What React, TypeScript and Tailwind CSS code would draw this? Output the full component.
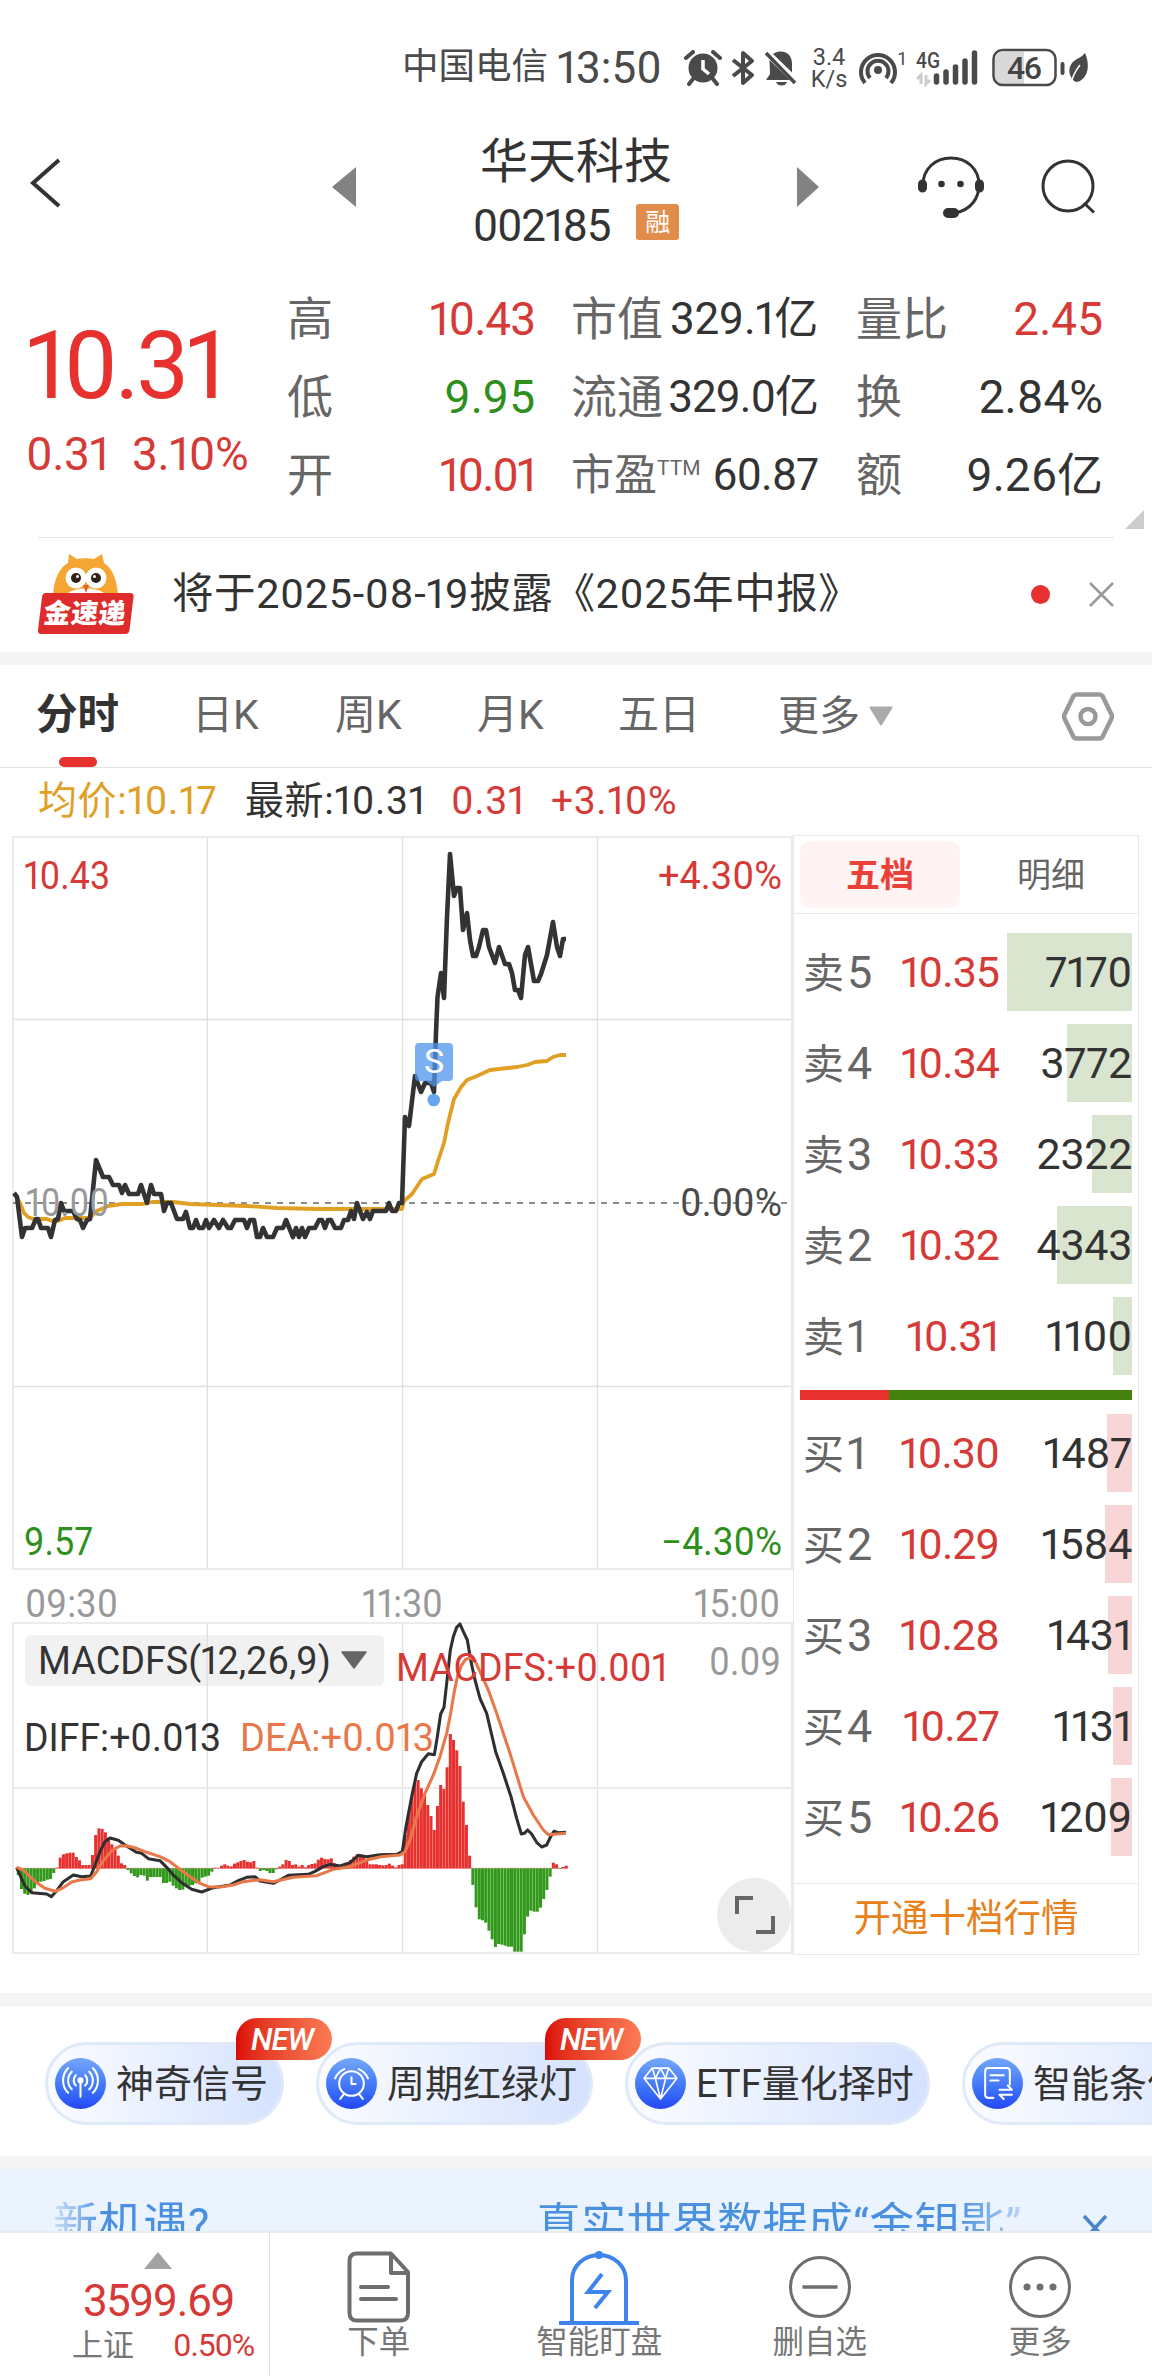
import type { ReactNode } from 'react'

type Level = { label: string; no: string; price: string; volume: string; width: number }

const SELLS: Level[] = [
  { label: '卖', no: '5', price: '10.35', volume: '7170', width: 125 },
  { label: '卖', no: '4', price: '10.34', volume: '3772', width: 65 },
  { label: '卖', no: '3', price: '10.33', volume: '2322', width: 40 },
  { label: '卖', no: '2', price: '10.32', volume: '4343', width: 75 },
  { label: '卖', no: '1', price: '10.31', volume: '1100', width: 19 },
]

const BUYS: Level[] = [
  { label: '买', no: '1', price: '10.30', volume: '1487', width: 25 },
  { label: '买', no: '2', price: '10.29', volume: '1584', width: 27 },
  { label: '买', no: '3', price: '10.28', volume: '1431', width: 24 },
  { label: '买', no: '4', price: '10.27', volume: '1131', width: 19 },
  { label: '买', no: '5', price: '10.26', volume: '1209', width: 21 },
]

// 分时价格线
const PRICE =
  '14,1193 17,1197 22,1237 25,1228 32,1228 36,1219 38,1219 41,1228 48,1228 51,1237 55,1220 58,1219 61,1203 64,1211 73,1211 77,1219 80,1220 83,1228 87,1220 90,1219 96,1160 103,1177 109,1177 113,1185 119,1185 122,1193 125,1185 129,1194 138,1194 141,1185 147,1203 151,1185 154,1194 161,1194 164,1211 167,1203 171,1203 174,1211 177,1219 183,1219 186,1212 190,1228 193,1228 196,1220 199,1228 203,1228 206,1220 209,1228 214,1220 219,1228 223,1220 228,1228 231,1228 235,1220 244,1220 247,1228 250,1220 254,1220 257,1237 260,1237 263,1228 267,1237 273,1237 277,1228 283,1228 286,1220 293,1237 296,1228 299,1237 302,1228 305,1237 309,1228 315,1228 319,1220 322,1220 325,1228 328,1220 331,1220 335,1228 341,1228 344,1220 348,1220 351,1211 354,1219 357,1203 363,1219 367,1212 370,1219 373,1211 386,1211 389,1203 392,1211 396,1211 399,1203 402,1203 405,1117 409,1126 415,1076 421,1092 425,1083 431,1083 434,1092 436,1033 437.5,997 441,973 444,998 447,917 450,854 454,896 457,888 460,888 463,930 467,913 470,940 473,956 476,956 479,947 483,930 486,930 489,947 495,963 499,947 505,964 509,964 512,973 515,990 518,990 521,998 525,955 528,947 534,981 538,981 541,974 547,955 553,922 557,947 560,956 563,939 566,939'

// 均价线
const AVERAGE =
  '15,1194 20,1203 24,1213 28,1217 33,1219 47,1219 52,1221 58,1221 65,1218 90,1218 97,1211 108,1206 122,1204 143,1204 152,1202 173,1202 190,1204 217,1205 247,1206 277,1208 317,1209 387,1209 402,1209 404,1201 412,1194 422,1179 434,1174 438,1161 444,1143 448,1123 454,1099 457,1094 461,1087 467,1080 477,1076 490,1070 517,1067 527,1065 535,1062 547,1061 553,1057 560,1055 566,1055'

// MACD 数据，单位为 1/3 像素
const DIFF_AM =
  '50,862 62,890 75,918 95,938 140,942 154,950 170,932 190,905 220,885 245,890 272,888 285,855 300,815 315,785 330,774 355,781 375,795 410,817 425,820 445,836 480,842 500,862 520,885 545,908 575,928 605,936 640,923 690,915 715,902 740,892 765,890 780,903 820,910 845,897 865,886 925,883 945,874 970,860 990,853 1020,858 1050,848 1075,826 1100,830 1140,824'
const DIFF_PM =
  '0,824 50,823 67,815 78,740 95,650 110,580 125,545 145,521 163,524 172,470 182,402 192,382 200,310 211,210 220,170 230,142 240,132 250,155 262,180 272,240 285,300 300,355 320,400 347,515 370,580 393,650 410,715 424,762 433,760 443,750 455,762 470,787 485,801 500,795 512,770 522,754 535,758 558,757'
const DEA_AM =
  '50,862 70,870 90,890 110,908 135,925 165,934 185,926 215,906 240,900 272,896 290,875 310,842 335,812 360,798 380,797 410,805 440,817 480,830 510,845 540,868 570,890 600,910 625,920 660,921 700,915 730,905 780,899 820,905 880,892 950,887 1000,868 1050,860 1100,840 1140,831'
const DEA_PM =
  '0,830 60,825 75,815 90,780 110,710 135,640 160,585 180,530 200,460 212,400 222,340 232,290 245,255 257,238 272,234 285,243 300,275 325,330 350,400 390,520 430,650 460,705 490,750 505,764 558,760'

const BARS_AM = [
  -20, -62, -76, -80, -72, -60, -46, -40, -38, -34, -32, -14, 2, 32, 42, 45, 47, 47, 34, 24, 10, 10, 10, 40, 100, 120,
  118, 108, 92, 72, 55, 38, 15, 10, -5, -15, -23, -27, -20, -22, -37, -26, -26, -26, -26, -44, -44, -40, -52, -60, -65,
  -64, -54, -52, -50, -45, -42, -28, -25, -22, -10, 2, 1, 8, 12, 8, 6, 14, 18, 22, 25, 20, 18, 22, 2, -8, -5, -8, -14,
  -14, -3, 5, 12, 25, 22, 10, 12, 5, 10, 3, 10, 13, 15, 26, 32, 28, 27, 30, 15, 6, 5, 8, 15, 25, 35, 42, 34, 35, 22, 12,
  12, 12, 10, 9, 10, 14, 8, 3, 10, 12,
]
const BARS_PM = [
  100, 160, 215, 255, 265, 240, 220, 190, 157, 115, 187, 250, 238, 303, 403, 385, 354, 307, 200, 130, 38, -50, -117,
  -153, -156, -163, -187, -213, -236, -227, -229, -232, -235, -235, -250, -250, -250, -198, -145, -127, -130, -130, -118,
  -92, -65, -25, 17, 12, -2, 4, 8,
]

function Bars({ values, from, to }: { values: number[]; from: number; to: number }) {
  const step = (to - from) / (values.length - 1)
  return (
    <>
      {values.map((v, i) => (
        <rect
          key={i}
          x={from + i * step - 4.8}
          y={v > 0 ? 865 - v : 865}
          width={9.1}
          height={Math.abs(v)}
          fill={v > 0 ? '#e6312f' : '#33991d'}
        />
      ))}
    </>
  )
}

function Label({ x, y, w, fill, end, children }: { x: number; y: number; w: number; fill: string; end?: boolean; children: string }) {
  return (
    <text x={end ? x - w : x} y={y} textLength={w} lengthAdjust="spacingAndGlyphs" fill={fill} fontSize="38">
      {children}
    </text>
  )
}

function Chart() {
  return (
    <svg className="block h-[1121px] w-[793px] shrink-0" viewBox="0 835 793 1121">
      <rect x="25" y="1635" width="359" height="51" rx="6" fill="#f1f1f1" />
      <g stroke="#e0e0e0" strokeWidth="1.3" fill="none">
        <path d="M207.300 837V1569M402.500 837V1569M597.500 837V1569M13 1019.500H792M13 1386.500H792" />
        <path d="M207.300 1623V1953M402.500 1623V1953M597.500 1623V1953" />
        <path d="M13 837H792V1569H13ZM13 1623H792V1953H13ZM13 1788H792" stroke="#ebebeb" strokeWidth="2" />
      </g>
      <path d="M13 1203H792" stroke="#8c8c8c" strokeWidth="1.8" strokeDasharray="6 6" />

      <polyline points={AVERAGE} fill="none" stroke="#dfa025" strokeWidth="3.8" strokeLinejoin="round" />
      <polyline points={PRICE} fill="none" stroke="#333" strokeWidth="4.6" strokeLinejoin="round" />
      <Label x={26} y={1216} w={83} fill="#999">10.00</Label>

      <Label x={24} y={889} w={86} fill="#d63a37">10.43</Label>
      <Label x={24} y={1555} w={69} fill="#2e8f1c">9.57</Label>
      <Label x={782} y={889} w={124} fill="#d63a37" end>+4.30%</Label>
      <Label x={782} y={1216} w={102} fill="#4a4a4a" end>0.00%</Label>
      <Label x={782} y={1555} w={121} fill="#2e8f1c" end>−4.30%</Label>

      {/* 卖点标记 */}
      <path d="M419 1043h30a4 4 0 0 1 4 4v30a4 4 0 0 1-4 4h-7l-8 6-8-6h-7a4 4 0 0 1-4-4v-30a4 4 0 0 1 4-4z" fill="#4d94ee" fillOpacity=".75" />
      <text x="434" y="1073" textAnchor="middle" fill="#fff" fontSize="34">S</text>
      <circle cx="433.700" cy="1100" r="6.300" fill="#6aa5f0" />

      <Label x={25} y={1617} w={93} fill="#999">09:30</Label>
      <Label x={362} y={1617} w={81} fill="#999">11:30</Label>
      <Label x={780} y={1617} w={86} fill="#999" end>15:00</Label>

      <g transform="translate(0 1580) scale(.33333)" fill="none" strokeWidth="9.200" strokeLinejoin="round">
        <path d="M50 865H1705" stroke="#e99" strokeWidth="3" />
        <Bars values={BARS_AM} from={55} to={1207} />
        <Bars values={BARS_PM} from={1216} to={1699} />
        <polyline points={DIFF_AM} stroke="#2f2f2f" />
        <polyline points={DEA_AM} stroke="#e8784a" />
        <g transform="translate(1140 0)">
          <polyline points={DIFF_PM} stroke="#2f2f2f" />
          <polyline points={DEA_PM} stroke="#e8784a" />
        </g>
      </g>

      <Label x={38} y={1674} w={293} fill="#333">MACDFS(12,26,9)</Label>
      <path d="M342 1652h24l-12 16z" fill="#666" stroke="#666" strokeWidth="1.5" strokeLinejoin="round" />
      <Label x={396} y={1681} w={272} fill="#d63a37">MACDFS:+0.001</Label>
      <Label x={781} y={1675} w={72} fill="#999" end>0.09</Label>
      <Label x={24} y={1751} w={197} fill="#333">DIFF:+0.013</Label>
      <Label x={240} y={1751} w={194} fill="#e8784a">DEA:+0.013</Label>

      {/* 全屏按钮 */}
      <circle cx="754" cy="1915" r="37" fill="#ececec" />
      <path d="M737 1914v-16h16M773 1916v16h-17" fill="none" stroke="#666" strokeWidth="4" />
    </svg>
  )
}

function LevelRow({ level, sell }: { level: Level; sell?: boolean }) {
  return (
    <div className="relative flex h-[78px] items-center text-[43px] leading-none">
      <div
        className={`absolute right-0 top-0 h-full ${sell ? 'bg-[#d9e5ce]' : 'bg-[#f9d6d6]'}`}
        style={{ width: level.width }}
      />
      <div className="relative w-[80px] pl-[3px] text-[41px] text-[#666]">
        {level.label}
        <span className="ml-[3px] text-[45px]">{level.no}</span>
      </div>
      <div className="relative w-[119px] text-right tracking-[-1px] text-[#d63a37]">{level.price}</div>
      <div className="relative flex-1 text-right tracking-[-0.300px] text-[#333]">{level.volume}</div>
    </div>
  )
}

function OrderBook() {
  return (
    <div className="flex h-[1120px] w-[346px] flex-col border border-[#e8e8e8] px-px">
      <div className="-mx-px flex h-[78px] items-center border-b border-[#e8e8e8] pl-[6px] text-[34px] leading-none">
        <div className="flex h-[67px] w-[160px] items-center justify-center rounded-[10px] bg-[#fff3f3] font-bold text-[#ea4038]">五档</div>
        <div className="flex-1 pl-[4px] text-center text-[#666]">明细</div>
      </div>
      <div className="flex flex-1 flex-col pl-[5px] pr-[5px] pt-[19px]">
        <div className="flex flex-col gap-[13px]">
          {SELLS.map((l) => <LevelRow key={l.price} level={l} sell />)}
        </div>
        <div className="mt-[15px] mb-[14px] flex h-[10px]">
          <div className="w-[89px] bg-[#e6312f]" />
          <div className="flex-1 bg-[#43820d]" />
        </div>
        <div className="flex flex-col gap-[13px]">
          {BUYS.map((l) => <LevelRow key={l.price} level={l} />)}
        </div>
      </div>
      <div className="-mx-px flex h-[71px] items-center justify-center border-t border-[#e8e8e8] text-[37.5px] leading-none text-[#e8801c]">
        开通十档行情
      </div>
    </div>
  )
}

function StatusBar() {
  return (
    <div className="flex h-[100px] items-center pl-[402px] pt-[35px] text-[#4a4a4a] leading-none">
      <div className="flex h-[66px] items-center">
        <span className="w-[155px] text-[36.500px]">中国电信</span>
        <span className="w-[126px] text-[44px]">13:50</span>
        <svg className="h-[36px] w-[40px]" viewBox="0 0 40 36">
          <circle cx="20" cy="18" r="14.500" fill="#4a4a4a" />
          <path d="M3 8l7-6M37 8l-7-6M10 29l-4 5M30 29l4 5" stroke="#4a4a4a" strokeWidth="4" strokeLinecap="round" />
          <path d="M20 10v9l6 5" stroke="#fff" strokeWidth="3.500" fill="none" />
        </svg>
        <svg className="ml-[8px] h-[36px] w-[24px]" viewBox="0 0 24 36" fill="none" stroke="#4a4a4a" strokeWidth="4" strokeLinejoin="round">
          <path d="M2 10l19 15-9 8V3l9 8L2 26" />
        </svg>
        <svg className="ml-[9px] h-[36px] w-[34px]" viewBox="0 0 34 36" fill="#4a4a4a">
          <path d="M9 4c3-2 5-2.500 8-2.500 7 0 11 5 11 12v9zM5.500 10L26 30H2l4-6zM12 32h11c-1 2.500-3 3.500-5.500 3.500S13 34.500 12 32z" />
          <path d="M2 3l29 30" stroke="#4a4a4a" strokeWidth="3.500" />
        </svg>
        <div className="ml-[12px] w-[38px] text-center text-[23.500px] leading-[22px]">
          3.4
          <br />
          K/s
        </div>
        <svg className="ml-[10px] h-[36px] w-[40px]" viewBox="0 0 40 36" fill="none" stroke="#4a4a4a" strokeWidth="4">
          <path d="M7 33A17 17 0 1 1 33 33M12 28A10.500 10.500 0 1 1 28 28" />
          <circle cx="20" cy="20" r="4" fill="#4a4a4a" stroke="none" />
        </svg>
        <span className="mb-[18px] w-[14px] text-[18px]">1</span>
        <div className="h-[36px] w-[70px]">
          <svg className="h-[36px] w-[70px] overflow-visible" viewBox="-2 0 70 36">
            <path d="M22.500 32v-6M32 32v-10M41.500 32v-15M51 32v-21M60.500 32v-29" stroke="#4a4a4a" strokeWidth="5.500" strokeLinecap="round" />
            <path d="M7 34v-9l-4 4M12 25v9l4-4" stroke="#ccc" strokeWidth="3" fill="none" />
            <text x="2" y="18" fontSize="22" fontWeight="500" textLength="24" lengthAdjust="spacingAndGlyphs" fill="#4a4a4a">4G</text>
          </svg>
        </div>
        <svg className="ml-[9px] h-[40px] w-[76px]" viewBox="0 0 76 40">
          <path d="M12 3.500H33V36.500H12a8 8 0 0 1-8-8v-17a8 8 0 0 1 8-8z" fill="#d9d9d9" />
          <rect x="2.500" y="2" width="62" height="35" rx="9" fill="none" stroke="#4a4a4a" strokeWidth="2.500" />
          <path d="M71.500 16v9" stroke="#4a4a4a" strokeWidth="4" strokeLinecap="round" />
          <text x="33.500" y="31" textAnchor="middle" fontSize="32" fontWeight="500" textLength="35" fill="#444">46</text>
        </svg>
        <svg className="ml-[1px] h-[32px] w-[22px]" viewBox="0 0 22 32">
          <path d="M17 1c4 9 5 22-5 28C8 31 6 29 5 28 0 22 0 14 6 9 10 6 14 5 17 1z" fill="#4a4a4a" />
          <path d="M3 31c2-8 5-13 9-18" stroke="#fff" strokeWidth="1.500" fill="none" />
        </svg>
      </div>
    </div>
  )
}

function Header() {
  return (
    <div className="flex h-[170px] items-center leading-none">
      <svg className="-mt-[4px] ml-[29px] h-[50px] w-[34px]" viewBox="0 0 34 50">
        <path d="M30 2L4 25l26 23" fill="none" stroke="#333" strokeWidth="4" />
      </svg>
      <svg className="ml-[269px] mt-[4px] h-[40px] w-[24px]" viewBox="0 0 24 40">
        <path d="M24 0v40L0 20z" fill="#828282" />
      </svg>
      <div className="flex w-[441px] flex-col items-center pt-[15px] pr-px">
        <div className="text-[48px] text-[#333]">华天科技</div>
        <div className="mt-[18px] flex items-center text-[44px] tracking-[-1.300px] text-[#333]">
          002185
          <span className="-mt-[7px] ml-[26px] flex h-[36px] w-[43px] items-center justify-center rounded-[3px] bg-[#e08d4c] text-[25px] tracking-normal text-white">融</span>
        </div>
      </div>
      <svg className="mt-[4px] h-[40px] w-[22px]" viewBox="0 0 22 40">
        <path d="M0 0v40l22-20z" fill="#828282" />
      </svg>
      <svg className="ml-[99px] mt-[4px] h-[64px] w-[66px]" viewBox="0 0 66 64" fill="none" stroke="#333" strokeWidth="3">
        <path d="M5 30C5 14 17 3 33 3s28 11 28 27c0 13-8 25-24 28" />
        <rect x="1.500" y="26" width="6" height="10" rx="3" fill="#333" />
        <rect x="58.500" y="26" width="6" height="10" rx="3" fill="#333" />
        <rect x="26.500" y="54.500" width="13" height="7" rx="3.500" fill="#333" />
        <circle cx="23.500" cy="29" r="3.300" fill="#333" stroke="none" />
        <circle cx="42.500" cy="29" r="3.300" fill="#333" stroke="none" />
      </svg>
      <svg className="ml-[57px] mt-[4px] h-[56px] w-[56px]" viewBox="0 0 56 56" fill="none" stroke="#333" strokeWidth="3">
        <circle cx="27" cy="27" r="25" />
        <path d="M43 44l10 9.500" />
      </svg>
    </div>
  )
}

function Stat({ name, value, color = 'text-[#333]' }: { name: ReactNode; value: string; color?: string }) {
  return (
    <div className="flex h-[78px] items-center justify-between">
      <span className="text-[46px] tracking-normal text-[#666]">{name}</span>
      <span className={color}>{value}</span>
    </div>
  )
}

function Quote() {
  return (
    <div className="relative flex h-[267px] leading-none">
      <div className="w-[287px] shrink-0 pl-[26px] text-[#e6312f]">
        <div className="mt-[49px] text-[94px] tracking-[-3.300px]">10.31</div>
        <div className="mt-[18px] flex text-[46px] tracking-[-0.400px] text-[#d63a37]">
          <span className="w-[106px]">0.31</span>
          <span>3.10%</span>
        </div>
      </div>
      <div className="mt-[10px] w-[248px] text-[46px]">
        <Stat name="高" value="10.43" color="text-[#d63a37] tracking-[-1px]" />
        <Stat name="低" value="9.95" color="text-[#2e8f1c]" />
        <Stat name="开" value="10.01" color="text-[#d63a37] tracking-[-2px]" />
      </div>
      <div className="mt-[10px] ml-[36px] w-[247px] text-[44px] tracking-[-1px]">
        <Stat name="市值" value="329.1亿" color="text-[#333] tracking-[-0.200px]" />
        <Stat name="流通" value="329.0亿" />
        <Stat
          name={
            <span className="flex items-center text-[43px]">
              市盈<span className="-mt-[14px] text-[21px]">TTM</span>
            </span>
          }
          value="60.87"
        />
      </div>
      <div className="mt-[10px] ml-[38px] w-[247px] text-[46px]">
        <Stat name="量比" value="2.45" color="text-[#d63a37]" />
        <Stat name="换" value="2.84%" />
        <Stat name="额" value="9.26亿" />
      </div>
      <svg className="absolute bottom-[8px] right-[8px] h-[19px] w-[19px]" viewBox="0 0 19 19">
        <path d="M19 0v19H0z" fill="#ccc" />
      </svg>
    </div>
  )
}

function News() {
  return (
    <div className="mx-[38px] flex h-[115px] items-center border-t border-[#e6e6e6] pb-[2px] leading-none">
      <svg className="h-[82px] w-[96px]" viewBox="0 0 96 82">
        <path d="M15 46C15 26 22 14 30 10L31 1l8 5c5-1 12-1 17 0l8-5 2 9c8 5 14 17 14 36z" fill="#f5a531" />
        <path d="M30 40c8-6 28-6 36 0l2 6H28z" fill="#fff" />
        <circle cx="38" cy="25" r="10.500" fill="#fff" />
        <circle cx="58" cy="25" r="10.500" fill="#fff" />
        <circle cx="38" cy="25" r="5" fill="#2f211c" />
        <circle cx="58" cy="25" r="5" fill="#2f211c" />
        <circle cx="39.500" cy="23.500" r="1.500" fill="#fff" />
        <circle cx="56.500" cy="23.500" r="1.500" fill="#fff" />
        <path d="M45 32h6l-3 8z" fill="#e5622a" />
        <path d="M8 40h84q4 0 3.500 4l-4 33q-.5 4-4 4H3q-3.500 0-3-4l4-33q.5-4 4-4z" fill="#de2c2c" />
        <text x="46" y="70" textAnchor="middle" transform="skewX(-6) translate(7 0)" fontSize="27" fontWeight="900" textLength="82" fill="#fff">金速递</text>
      </svg>
      <div className="ml-[38px] flex-1 whitespace-nowrap text-[41.500px] tracking-[0.600px] text-[#333]">将于2025-08-19披露《2025年中报》</div>
      <div className="h-[19px] w-[19px] rounded-full bg-[#e6312f]" />
      <svg className="ml-[39px] h-[25px] w-[25px]" viewBox="0 0 25 25">
        <path d="M1 1l23 23M24 1L1 24" stroke="#999" strokeWidth="2.500" />
      </svg>
    </div>
  )
}

function Tabs() {
  return (
    <div className="flex h-[103px] border-b border-[#e2e2e2] text-[41px] leading-[100px] text-[#666]">
      <div className="relative ml-[36px] w-[156px] text-[41.500px] font-bold text-[#333]">
        分时
        <div className="absolute bottom-0 left-[23px] h-[10px] w-[38px] rounded-[5px] bg-[#e6312f]" />
      </div>
      <div className="w-[143px]">日K</div>
      <div className="w-[142px]">周K</div>
      <div className="w-[141px]">月K</div>
      <div className="w-[160px]">五日</div>
      <div className="flex w-[284px] items-center">
        更多
        <svg className="ml-[9px] h-[20px] w-[24px]" viewBox="0 0 24 20">
          <path d="M1.500 1.500h21L12 18.500z" fill="#aaa" stroke="#aaa" strokeWidth="2" strokeLinejoin="round" />
        </svg>
      </div>
      <svg className="mt-[27px] h-[49px] w-[52px]" viewBox="0 0 52 49" fill="none" stroke="#999" strokeWidth="4.500" strokeLinejoin="round">
        <path d="M14.500 2.500h23q2 0 3 1.500l9 18.500q1 2 0 4l-9 18.500q-1 1.500-3 1.500h-23q-2 0-3-1.500l-9-18.500q-1-2 0-4l9-18.500q1-1.500 3-1.500z" />
        <circle cx="26" cy="24.500" r="7.500" />
      </svg>
    </div>
  )
}

function FeatureIcon({ children }: { children: ReactNode }) {
  return (
    <span className="flex h-[51px] w-[51px] shrink-0 items-center justify-center rounded-full bg-linear-to-b from-[#74a7f8] to-[#2545f5]">
      <svg className="h-[37px] w-[37px]" viewBox="0 0 36 36" fill="none" stroke="#fff" strokeWidth="2" strokeLinecap="round" strokeLinejoin="round">
        {children}
      </svg>
    </span>
  )
}

function Feature({ width, isNew, icon, children }: { width: string; isNew?: boolean; icon: ReactNode; children: string }) {
  return (
    <div className={`relative flex h-[83px] shrink-0 items-center rounded-full border-[3px] border-[#dfe9f8] bg-linear-to-r from-[#fbfcff] to-[#d5e2fe] pl-[7px] text-[38px] leading-none text-[#333] ${width}`}>
      <FeatureIcon>{icon}</FeatureIcon>
      <span className="ml-[10px] whitespace-nowrap">{children}</span>
      {isNew && (
        <span className="absolute -right-[51px] -top-[27px] flex h-[42px] w-[96px] items-center justify-center rounded-[21px] rounded-bl-none bg-linear-to-r from-[#dc0606] to-[#fb7a54] pr-[4px] text-[31px] font-medium italic tracking-[-1px] text-white">
          NEW
        </span>
      )}
    </div>
  )
}

function Features() {
  return (
    <div className="flex h-[150px] gap-[32px] overflow-hidden pl-[45px] pt-[36px]">
      <Feature
        width="w-[239px]"
        isNew
        icon={
          <>
            <circle cx="18" cy="15" r="2" fill="#fff" />
            <path d="M18 16v15M13.500 20a7 7 0 0 1 0-10M22.500 20a7 7 0 0 0 0-10M9.500 23.500a12 12 0 0 1 0-17M26.500 23.500a12 12 0 0 0 0-17M6 27a17 17 0 0 1 0-24M30 27a17 17 0 0 0 0-24" />
          </>
        }
      >
        神奇信号
      </Feature>
      <Feature
        width="w-[277px]"
        isNew
        icon={
          <>
            <circle cx="18" cy="18" r="12" />
            <path d="M18 12v6.500h4M10 29l-3 4M26 29l3 4M2 13a17 17 0 0 1 9-9M34 13a17 17 0 0 0-9-9" />
          </>
        }
      >
        周期红绿灯
      </Feature>
      <Feature
        width="w-[305px]"
        icon={<path d="M10 3h16l8 10-16 20L2 13zM2 13h32M10 3l3 10 5 20 5-20 3-10M13 13l5-10 5 10" strokeWidth="1.600" />}
      >
        ETF量化择时
      </Feature>
      <Feature
        width="w-[305px]"
        icon={<path d="M14 32H9q-3 0-3-3V6q0-3 3-3h18q3 0 3 3v13M11 10h13M11 15h8M20 24h12l-4-4M32 29H20l4 4" />}
      >
        智能条件单
      </Feature>
    </div>
  )
}

function Marquee() {
  return (
    <div className="flex h-[62px] overflow-hidden bg-[#ebf4fe] pt-[33px] text-[45px] leading-none text-[#4a90e0]">
      <div className="ml-[53px] flex w-[1008px] shrink-0 whitespace-nowrap [mask-image:linear-gradient(90deg,rgba(0,0,0,0.2),#000_5%,#000_90%,rgba(0,0,0,0.2)_97%)]">
        <span className="w-[483px]">新机遇?</span>
        <span className="tracking-[0.300px]">真实世界数据成“金钥匙”</span>
      </div>
      <svg className="ml-[21px] mt-[12px] h-[28px] w-[26px] shrink-0" viewBox="0 0 26 28">
        <path d="M2 2l22 24M24 2L2 26" stroke="#4a85cc" strokeWidth="3.500" />
      </svg>
    </div>
  )
}

function NavItem({ label, children }: { label: string; children: ReactNode }) {
  return (
    <div className="flex flex-1 flex-col items-center pr-[3px] pt-[17px]">
      <svg className="h-[76px] w-[84px]" viewBox="0 0 84 76" fill="none" stroke="#6e6e6e" strokeWidth="3">
        {children}
      </svg>
      <span className="mt-[1px] text-[31.500px] text-[#777]">{label}</span>
    </div>
  )
}

function BottomNav() {
  return (
    <div className="flex h-[145px] border-t-2 border-[#e8ecf0] bg-white leading-none">
      <div className="flex w-[270px] flex-col items-center border-r border-[#e2e2e2] pt-[19px] text-[#d63a37]">
        <svg className="ml-[46px] h-[17px] w-[28px]" viewBox="0 0 28 17">
          <path d="M14 0l14 17H0z" fill="#a2a2a2" />
        </svg>
        <div className="ml-[48px] mt-[10px] text-[44px] tracking-[-1.500px]">3599.69</div>
        <div className="mt-[6px] flex w-full items-center pl-[72px] text-[31px]">
          <span className="w-[101px] text-[#777]">上证</span>
          <span className="text-[32px] tracking-[-1.200px]">0.50%</span>
        </div>
      </div>
      <NavItem label="下单">
        <path d="M20 3.500h34L71 22v41q0 7.500-7.500 7.500H20q-7.500 0-7.500-7.500V11q0-7.500 7.500-7.500zM54 4v19h17M24 37h27M24 49h35" strokeWidth="4" strokeLinejoin="round" strokeLinecap="round" />
      </NavItem>
      <NavItem label="智能盯盘">
        <path d="M15 72V30a27 25 0 0 1 54 0v42M2 73h80" stroke="#3f83ec" strokeWidth="4" />
        <circle cx="42" cy="5" r="4" fill="#3f83ec" stroke="none" />
        <path d="M45 24L31 42h20L38 58" stroke="#3f83ec" strokeWidth="4" />
      </NavItem>
      <NavItem label="删自选">
        <circle cx="42" cy="37" r="29.500" />
        <path d="M24.500 37h35" strokeWidth="3.500" />
      </NavItem>
      <NavItem label="更多">
        <circle cx="42" cy="37" r="29.500" />
        <g fill="#6e6e6e" stroke="none">
          <circle cx="29" cy="37" r="3.500" />
          <circle cx="42" cy="37" r="3.500" />
          <circle cx="55" cy="37" r="3.500" />
        </g>
      </NavItem>
    </div>
  )
}

export default function App() {
  return (
    <div className="flex h-[2376px] w-[1152px] flex-col overflow-hidden bg-white font-[Roboto,'Noto_Sans_CJK_SC',sans-serif] proportional-nums">
      <StatusBar />
      <Header />
      <Quote />
      <News />
      <div className="h-[13px] shrink-0 bg-[#f4f4f4]" />
      <Tabs />
      <div className="flex h-[67px] items-center pl-[38px] text-[39px] leading-none tracking-[0.600px]">
        <span className="w-[207px] text-[#dfa025]">均价:10.17</span>
        <span className="w-[206px] text-[#333]">最新:10.31</span>
        <span className="w-[100px] text-[#d63a37]">0.31</span>
        <span className="text-[#d63a37]">+3.10%</span>
      </div>
      <div className="flex h-[1158px]">
        <Chart />
        <OrderBook />
      </div>
      <div className="h-[13px] shrink-0 bg-[#f4f4f4]" />
      <Features />
      <div className="h-[13px] shrink-0 bg-[#f4f4f4]" />
      <Marquee />
      <BottomNav />
    </div>
  )
}
